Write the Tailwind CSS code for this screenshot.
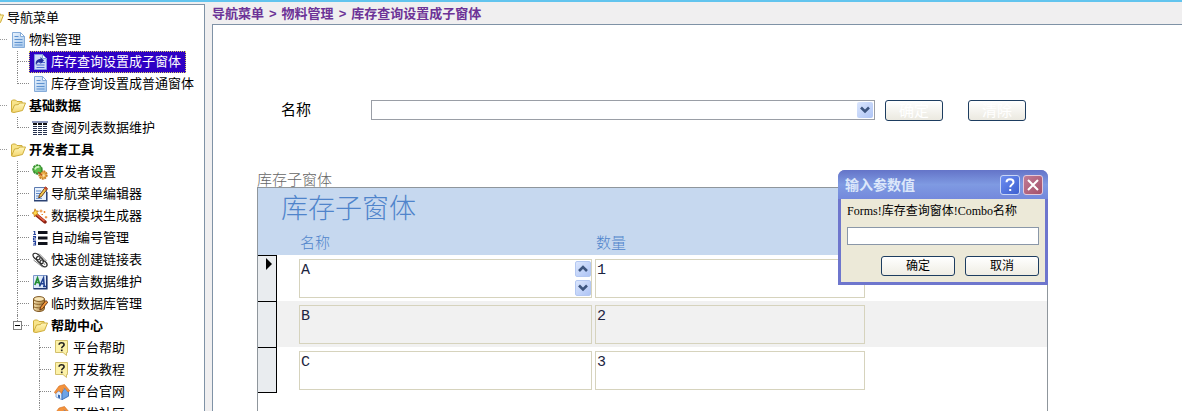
<!DOCTYPE html>
<html lang="zh-CN">
<head>
<meta charset="utf-8">
<title>库存查询设置成子窗体</title>
<script src="https://cdn.jsdelivr.net/npm/@tailwindcss/browser@4"></script>
</head>
<body class="relative h-screen overflow-hidden flex flex-col bg-[#f0eff0] text-black font-['Liberation_Sans','Noto_Sans_CJK_SC',sans-serif] text-[13px] leading-[22px]">

<svg width="0" height="0" class="absolute" aria-hidden="true">
  <defs>
    <linearGradient id="gDoc" x1="0" y1="0" x2="1" y2="1"><stop offset="0" stop-color="#eaf3fd"/><stop offset="1" stop-color="#a3c6ec"/></linearGradient>
    <linearGradient id="gFold" x1="0" y1="0" x2="0" y2="1"><stop offset="0" stop-color="#fff6bb"/><stop offset="1" stop-color="#f3d66e"/></linearGradient>
    <linearGradient id="gDb" x1="0" y1="0" x2="1" y2="0"><stop offset="0" stop-color="#f3dfae"/><stop offset="1" stop-color="#a97a33"/></linearGradient>
  </defs>
  <symbol id="doc" viewBox="0 0 16 16"><path d="M2.5 .5h8l4 4v11h-12z" fill="url(#gDoc)" stroke="#86acd9"/><path d="M10.500 .5v4h4z" fill="#fff" stroke="#86acd9"/><path d="M4.500 4.500h4M4.500 7.500h8M4.500 10.500h8M4.500 13h8" stroke="#5f92cf"/></symbol>
  <symbol id="docsel" viewBox="0 0 16 16"><path d="M2.500 .5h8l4 4v11h-12z" fill="#cfdcf8" stroke="#7f97e4"/><path d="M10.500 .5v4h4z" fill="#fff" stroke="#86acd9"/><path d="M7 8.500h6M4.500 11h8M4.500 13.500h8" stroke="#4d6fd0"/><path d="M4 11c-1-3.500 1-6 4.500-6V3l3.500 3.500L8.500 10V8C6 8 5 9 4 11z" fill="#23309c"/></symbol>
  <symbol id="folder" viewBox="0 0 16 16"><path d="M1.500 13.500V3l1-1h3l1.500 1.500h5l.5 3" fill="#f8e48a" stroke="#cfae3c"/><path d="M1.500 14L4.500 7l4-.5 1-1.500h6l-3 7.500L4 14.500z" fill="url(#gFold)" stroke="#cfae3c"/></symbol>
  <symbol id="grid" viewBox="0 0 16 16"><path d="M0 2h16" stroke="#1b2e74" stroke-width="1"/><path d="M1 4h15" stroke="#111" stroke-width="2" stroke-dasharray="4 1"/><path d="M1 6.500h15M1 8.500h15M1 10.500h15M1 12.500h15M1 14.500h15" stroke="#26324f" stroke-dasharray="4 1"/></symbol>
  <symbol id="gears" viewBox="0 0 16 16"><circle cx="11" cy="11" r="3.700" fill="#ecb04c" stroke="#c98228" stroke-width="2" stroke-dasharray="1.800 .7"/><circle cx="5.500" cy="5.500" r="4.300" fill="#5fc04c" stroke="#37902f" stroke-width="1.800" stroke-dasharray="2.400 .6"/><path d="M3 5.500c.5-2 2-3 4.500-2.500" stroke="#d0f5c2" fill="none" stroke-width="1.600"/><path d="M6 8l5 4" stroke="#b54f20" stroke-width="1.400"/><circle cx="11.500" cy="11.500" r="1.200" fill="#fbe2a8"/></symbol>
  <symbol id="edit" viewBox="0 0 16 16"><path d="M2.500 1.500h12v13h-12z" fill="#e8f1fc" stroke="#5d7bb0"/><path d="M2 14.800h12.800V6" fill="none" stroke="#2b4273" stroke-width="1.500"/><path d="M4 5h5M4 7.500h4M4 10h3M4 12.300h6" stroke="#5b86c6"/><path d="M13.500 1l2 1.700-6 7.800-2.800 1.400.8-3z" fill="#f3c64b" stroke="#5d3413" stroke-width=".9"/><path d="M13.200 .6l2.500 2-1.300 1.600-2.400-2z" fill="#c9442e"/></symbol>
  <symbol id="wand" viewBox="0 0 16 16"><path d="M4.500 7l8.500 7" stroke="#8c1f10" stroke-width="3.400" stroke-linecap="round"/><path d="M4.500 6.500l8 6.700" stroke="#e86045" stroke-width="1.600"/><path d="M3 .8l1 2.200L6.300 3 5 4.800 6.300 7 4 6.600 2.500 9 2 6.200.2 5l1.900-1z" fill="#ffd94a" stroke="#c07818" stroke-width=".8"/><path d="M9 1.500v3M7.500 3h3M12.500 3v2M11.500 4h2M14 8v2.500M12.800 9.200h2.500M9.500 6.500h1.500" stroke="#e8852e" stroke-width="1"/></symbol>
  <symbol id="num" viewBox="0 0 16 16"><path d="M6 2.500h9.500M6 8h9.500M6 13.500h9.500" stroke="#10131c" stroke-width="3"/><path d="M1.500 1.500h1.200V4.500M1.300 4.500h2.700M1 6.500h2.500v1.500H1.500V10H4M1 11.500h2.500v3.500H1M1.500 13.200h2" stroke="#22409c" fill="none" stroke-width="1.100"/></symbol>
  <symbol id="chain" viewBox="0 0 16 16"><g fill="none" stroke="#2e2e2e" stroke-width="1.300"><ellipse cx="4.500" cy="4.500" rx="4" ry="2.500" transform="rotate(40 4.500 4.500)"/><ellipse cx="8" cy="8" rx="4.200" ry="2.500" transform="rotate(45 8 8)"/><ellipse cx="11.500" cy="11.500" rx="4" ry="2.500" transform="rotate(40 11.500 11.500)"/><path d="M1.500 8l9 7M7 1.500l7.500 7.500M6 3l7 10" stroke="#888" stroke-width="1"/></g></symbol>
  <symbol id="lang" viewBox="0 0 16 16"><path d="M1.500 1.500h13v13h-13z" fill="#dfeafa" stroke="#7d98cc"/><path d="M14.800 1.500v13.300H1.500" fill="none" stroke="#1f3672" stroke-width="1.600"/><path d="M2.800 11L5.500 4 8 11M3.800 8.500h3.500" fill="none" stroke="#228e36" stroke-width="1.700"/><path d="M7.500 12.500l4-8.500 .8 8.500M9 9.700h3.300M11 12.500h3" fill="none" stroke="#1f3f8f" stroke-width="1.600"/></symbol>
  <symbol id="db" viewBox="0 0 16 16"><path d="M1.500 3v9.500c0 1.500 2 3 5.500 3s5.500-1.500 5.500-3V3" fill="url(#gDb)" stroke="#7d5520"/><ellipse cx="7" cy="3" rx="5.500" ry="2.400" fill="#f7e5b6" stroke="#7d5520"/><path d="M1.500 7c1 1.600 9 2 11 0M1.500 10.500c1 1.600 9 2 11 0" fill="none" stroke="#8a6128"/><path d="M13.800 4.500l2 1.700-5.300 6.500-2.700 1.300.8-2.900z" fill="#f0983b" stroke="#5c2a10" stroke-width=".9"/></symbol>
  <symbol id="help" viewBox="0 0 16 16"><path d="M1.500 .5h12v12h-1v3l-3.500-3H1.500z" fill="#fdf2a8" stroke="#d2bf6c"/><path d="M5.100 4.800c0-2.800 5-2.800 5 0 0 1.600-2.400 1.600-2.400 3.400" fill="none" stroke="#222" stroke-width="1.600"/><path d="M6.900 9.500h1.700v1.700H6.900z" fill="#222"/></symbol>
  <symbol id="home" viewBox="0 0 16 16"><path d="M2 8v5l6 2.700V7z" fill="#e4eefc" stroke="#7fa6dc" stroke-width=".9"/><path d="M8 15.700l6.500-3.500V7l-3-3.500L8 8z" fill="#6ea3e6" stroke="#3c6fb8" stroke-width=".9"/><path d="M.3 8.500L5 2l5.500-1.500 5.300 6.300-1.800 1.200L10 3.300 7.500 9.500 4.800 6 1.800 9.500z" fill="#f4933c" stroke="#cf6b20" stroke-width=".6"/><path d="M4 10.500l2 .8v3.200l-2-.9z" fill="#3565ad"/></symbol>
  <symbol id="down" viewBox="0 0 16 16"><path d="M4 5.500l4 4 4-4" fill="none" stroke="#3d557f" stroke-width="2.600"/></symbol>
  <symbol id="up" viewBox="0 0 16 16"><path d="M4 10l4-4 4 4" fill="none" stroke="#3d557f" stroke-width="2.600"/></symbol>
</svg>

<div class="h-[2px] shrink-0 bg-[#62c4ee]"></div>

<div class="flex flex-1 min-h-0 pt-[2px]">
  <nav aria-label="导航菜单" class="w-[205px] shrink-0 overflow-hidden bg-white border-t border-r border-[#7f92a6] pt-[2px] whitespace-nowrap">
    <div class="flex h-[22px] items-center gap-[3px]">
      <span class="w-1 h-4 overflow-hidden flex justify-end"><svg class="size-4 shrink-0"><use href="#folder"/></svg></span>
      <span>导航菜单</span>
    </div>
    <ul>
      <li>
        <div class="flex h-[22px]"><i class="w-[7px] h-[11px] border-b border-dotted border-[#999]"></i>
          <a href="#" class="flex items-center gap-[3px] pl-[3px]"><svg class="size-4"><use href="#doc"/></svg>物料管理</a></div>
        <ul>
          <li class="flex h-[22px] pl-[17px]"><i class="w-3 flex flex-col"><b class="h-[11px] border-l border-b border-dotted border-[#888]"></b><b class="h-[11px] border-l border-dotted border-[#888]"></b></i>
            <a href="#" class="flex items-center gap-[3px] pl-[3px] pr-[5px] bg-[#2f00c4] text-white outline-1 -outline-offset-1 outline-dotted outline-[#d8d060]"><svg class="size-4"><use href="#docsel"/></svg>库存查询设置成子窗体</a></li>
          <li class="flex h-[22px] pl-[17px]"><i class="w-3 h-[11px] border-l border-b border-dotted border-[#888]"></i>
            <a href="#" class="flex items-center gap-[3px] pl-[3px]"><svg class="size-4"><use href="#doc"/></svg>库存查询设置成普通窗体</a></li>
        </ul>
      </li>
      <li>
        <div class="flex h-[22px]"><i class="w-[7px] h-[11px] border-b border-dotted border-[#999]"></i>
          <a href="#" class="flex items-center gap-[3px] pl-[3px] font-bold"><svg class="size-4"><use href="#folder"/></svg>基础数据</a></div>
        <ul>
          <li class="flex h-[22px] pl-[17px]"><i class="w-3 h-[11px] border-l border-b border-dotted border-[#888]"></i>
            <a href="#" class="flex items-center gap-[3px] pl-[3px]"><svg class="size-4"><use href="#grid"/></svg>查阅列表数据维护</a></li>
        </ul>
      </li>
      <li>
        <div class="flex h-[22px]"><i class="w-[7px] h-[11px] border-b border-dotted border-[#999]"></i>
          <a href="#" class="flex items-center gap-[3px] pl-[3px] font-bold"><svg class="size-4"><use href="#folder"/></svg>开发者工具</a></div>
        <ul>
          <li class="flex h-[22px] pl-[17px]"><i class="w-3 flex flex-col"><b class="h-[11px] border-l border-b border-dotted border-[#888]"></b><b class="h-[11px] border-l border-dotted border-[#888]"></b></i>
            <a href="#" class="flex items-center gap-[3px] pl-[3px]"><svg class="size-4"><use href="#gears"/></svg>开发者设置</a></li>
          <li class="flex h-[22px] pl-[17px]"><i class="w-3 flex flex-col"><b class="h-[11px] border-l border-b border-dotted border-[#888]"></b><b class="h-[11px] border-l border-dotted border-[#888]"></b></i>
            <a href="#" class="flex items-center gap-[3px] pl-[3px]"><svg class="size-4"><use href="#edit"/></svg>导航菜单编辑器</a></li>
          <li class="flex h-[22px] pl-[17px]"><i class="w-3 flex flex-col"><b class="h-[11px] border-l border-b border-dotted border-[#888]"></b><b class="h-[11px] border-l border-dotted border-[#888]"></b></i>
            <a href="#" class="flex items-center gap-[3px] pl-[3px]"><svg class="size-4"><use href="#wand"/></svg>数据模块生成器</a></li>
          <li class="flex h-[22px] pl-[17px]"><i class="w-3 flex flex-col"><b class="h-[11px] border-l border-b border-dotted border-[#888]"></b><b class="h-[11px] border-l border-dotted border-[#888]"></b></i>
            <a href="#" class="flex items-center gap-[3px] pl-[3px]"><svg class="size-4"><use href="#num"/></svg>自动编号管理</a></li>
          <li class="flex h-[22px] pl-[17px]"><i class="w-3 flex flex-col"><b class="h-[11px] border-l border-b border-dotted border-[#888]"></b><b class="h-[11px] border-l border-dotted border-[#888]"></b></i>
            <a href="#" class="flex items-center gap-[3px] pl-[3px]"><svg class="size-4"><use href="#chain"/></svg>快速创建链接表</a></li>
          <li class="flex h-[22px] pl-[17px]"><i class="w-3 flex flex-col"><b class="h-[11px] border-l border-b border-dotted border-[#888]"></b><b class="h-[11px] border-l border-dotted border-[#888]"></b></i>
            <a href="#" class="flex items-center gap-[3px] pl-[3px]"><svg class="size-4"><use href="#lang"/></svg>多语言数据维护</a></li>
          <li class="flex h-[22px] pl-[17px]"><i class="w-3 flex flex-col"><b class="h-[11px] border-l border-b border-dotted border-[#888]"></b><b class="h-[11px] border-l border-dotted border-[#888]"></b></i>
            <a href="#" class="flex items-center gap-[3px] pl-[3px]"><svg class="size-4"><use href="#db"/></svg>临时数据库管理</a></li>
          <li>
            <div class="flex h-[22px] pl-[13px]">
              <span class="flex flex-col items-center w-[9px]"><i class="h-[6px] border-l border-dotted border-[#888]"></i><button type="button" aria-label="折叠" class="size-[9px] border border-[#808080] bg-white flex items-center justify-center"><i class="w-[5px] h-px bg-black"></i></button></span>
              <i class="w-[7px] h-[11px] border-b border-dotted border-[#888]"></i>
              <a href="#" class="flex items-center gap-[3px] pl-[3px] font-bold"><svg class="size-4"><use href="#folder"/></svg>帮助中心</a></div>
            <ul>
              <li class="flex h-[22px] pl-[39px]"><i class="w-3 flex flex-col"><b class="h-[11px] border-l border-b border-dotted border-[#888]"></b><b class="h-[11px] border-l border-dotted border-[#888]"></b></i>
                <a href="#" class="flex items-center gap-[3px] pl-[3px]"><svg class="size-4"><use href="#help"/></svg>平台帮助</a></li>
              <li class="flex h-[22px] pl-[39px]"><i class="w-3 flex flex-col"><b class="h-[11px] border-l border-b border-dotted border-[#888]"></b><b class="h-[11px] border-l border-dotted border-[#888]"></b></i>
                <a href="#" class="flex items-center gap-[3px] pl-[3px]"><svg class="size-4"><use href="#help"/></svg>开发教程</a></li>
              <li class="flex h-[22px] pl-[39px]"><i class="w-3 flex flex-col"><b class="h-[11px] border-l border-b border-dotted border-[#888]"></b><b class="h-[11px] border-l border-dotted border-[#888]"></b></i>
                <a href="#" class="flex items-center gap-[3px] pl-[3px]"><svg class="size-4"><use href="#home"/></svg>平台官网</a></li>
              <li class="flex h-[22px] pl-[39px]"><i class="w-3 flex flex-col"><b class="h-[11px] border-l border-b border-dotted border-[#888]"></b><b class="h-[11px] border-l border-dotted border-[#888]"></b></i>
                <a href="#" class="flex items-center gap-[3px] pl-[3px]"><svg class="size-4"><use href="#home"/></svg>开发社区</a></li>
            </ul>
          </li>
        </ul>
      </li>
    </ul>
  </nav>

  <main class="flex-1 min-w-0 flex flex-col pl-[7px]">
    <div class="flex gap-[5px] h-5 leading-5 font-bold text-[#6c3397] whitespace-nowrap"><span>导航菜单</span><span>&gt;</span><span>物料管理</span><span>&gt;</span><span>库存查询设置成子窗体</span></div>

    <section class="flex-1 min-h-0 flex flex-col bg-white border-t border-l border-[#7f92a6] pl-11 pr-[134px] pt-[75px]">
      <form class="flex h-[21px] shrink-0 items-start pl-6 pr-[22px]">
        <label for="combo" class="w-[90px] text-[15px] leading-5">名称</label>
        <div class="flex flex-1 h-5 border border-[#9a9ea6] bg-white p-px">
          <input id="combo" type="text" class="flex-1 min-w-0 outline-none px-1">
          <button type="button" aria-label="展开" class="w-4 rounded-[2px] bg-linear-to-br from-[#dbe6fd] to-[#aec4f5] flex items-center justify-center"><svg class="size-4"><use href="#down"/></svg></button>
        </div>
        <button type="button" class="ml-[10px] w-[58px] h-[21px] rounded-[3px] border border-[#1d3d60] bg-linear-to-b from-white to-[#ebe9e0] text-[15px] leading-[18px] text-white">确定</button>
        <button type="button" class="ml-[25px] w-[58px] h-[21px] rounded-[3px] border border-[#1d3d60] bg-linear-to-b from-white to-[#ebe9e0] text-[15px] leading-[18px] text-white">清除</button>
      </form>

      <h2 class="mt-[50px] h-4 shrink-0 text-[15px] leading-[18px] font-light text-[#666]">库存子窗体</h2>
      <div class="flex-1 min-h-0 border border-b-0 border-[#8f969c]">
        <div class="h-[42px] pl-[23px] bg-[#c6d8ef] text-[27px] leading-[42px] font-light text-[#4f84cb]">库存子窗体</div>
        <table class="w-full table-fixed border-separate border-spacing-0 text-[15px]">
          <colgroup><col class="w-[19px]"><col class="w-[318px]"><col class="w-[270px]"><col></colgroup>
          <thead class="bg-[#c6d8ef] text-[#4f84cb]">
            <tr class="h-[25px]"><th></th><th class="pl-[23px] text-left font-light" id="h1">名称</th><th class="pl-px text-left font-light" id="h2">数量</th><th></th></tr>
          </thead>
          <tbody class="text-[#1c2440] font-['Liberation_Mono',monospace]">
            <tr class="h-[46px]">
              <td class="bg-[#e9ecef] border-t border-r border-black align-top"><svg class="ml-2 mt-[2px] w-[7px] h-3" viewBox="0 0 7 12"><path d="M0 0l6 6-6 6z"/></svg></td>
              <td class="pl-[22px] pr-[3px]"><div class="flex h-[39px] border border-[#d6d3bd] bg-white">
                <textarea aria-labelledby="h1" class="flex-1 min-w-0 resize-none overflow-hidden outline-none pl-px pt-px leading-5">A</textarea>
                <div class="flex flex-col justify-between w-4 py-px"><button type="button" aria-label="向上" class="h-4 rounded-[2px] border border-[#b4c8f2] bg-linear-to-br from-[#dbe6fd] to-[#aec4f5] flex items-center justify-center"><svg class="size-4 shrink-0"><use href="#up"/></svg></button><button type="button" aria-label="向下" class="h-4 rounded-[2px] border border-[#b4c8f2] bg-linear-to-br from-[#dbe6fd] to-[#aec4f5] flex items-center justify-center"><svg class="size-4 shrink-0"><use href="#down"/></svg></button></div>
              </div></td>
              <td><textarea aria-labelledby="h2" class="block w-full h-[39px] resize-none overflow-hidden outline-none border border-[#d6d3bd] bg-white pl-px pt-px leading-5">1</textarea></td>
              <td></td>
            </tr>
            <tr class="h-[46px] bg-[#f1f1f1]">
              <td class="bg-[#e9ecef] border-t border-r border-black"></td>
              <td class="pl-[22px] pr-[3px]"><textarea aria-labelledby="h1" class="block w-full h-[39px] resize-none overflow-hidden outline-none border border-[#d6d3bd] pl-px pt-px leading-5">B</textarea></td>
              <td><textarea aria-labelledby="h2" class="block w-full h-[39px] resize-none overflow-hidden outline-none border border-[#d6d3bd] pl-px pt-px leading-5">2</textarea></td>
              <td></td>
            </tr>
            <tr class="h-[46px]">
              <td class="bg-[#e9ecef] border-y border-r border-black"></td>
              <td class="pl-[22px] pr-[3px]"><textarea aria-labelledby="h1" class="block w-full h-[39px] resize-none overflow-hidden outline-none border border-[#d6d3bd] bg-white pl-px pt-px leading-5">C</textarea></td>
              <td><textarea aria-labelledby="h2" class="block w-full h-[39px] resize-none overflow-hidden outline-none border border-[#d6d3bd] bg-white pl-px pt-px leading-5">3</textarea></td>
              <td></td>
            </tr>
          </tbody>
        </table>
      </div>
    </section>
  </main>
</div>

<div role="dialog" aria-labelledby="dt" class="absolute right-[134px] top-[170px] w-[210px] rounded-t-[7px] bg-[#6e76cd] px-[3px] pb-[3px] overflow-hidden">
  <div class="-mx-[3px] h-[29px] flex items-center gap-[3px] pl-[7px] pr-[5px] bg-linear-to-b from-[#6474c8] via-[#7f9ae2] to-[#7489dc]">
    <h3 id="dt" class="flex-1 font-bold text-[14px] text-[#dce7fa]">输入参数值</h3>
    <button type="button" aria-label="帮助" class="size-5 rounded-[3px] border border-[#c9d6f6] bg-linear-to-br from-[#6d8df0] to-[#3d5fd0] flex items-center justify-center"><svg class="size-4 shrink-0" viewBox="0 0 16 16"><path d="M4.500 5.300c0-4 7-4 7 0 0 2.300-3.300 2.300-3.300 5" fill="none" stroke="#fff" stroke-width="2"/><path d="M7.200 12h2v2h-2z" fill="#fff"/></svg></button>
    <button type="button" aria-label="关闭" class="size-5 rounded-[3px] border border-[#e3c9da] bg-linear-to-br from-[#c07c96] to-[#a5506a] flex items-center justify-center"><svg class="size-4 shrink-0" viewBox="0 0 16 16"><path d="M3 3l10 10M13 3L3 13" stroke="#fff" stroke-width="2"/></svg></button>
  </div>
  <div class="bg-[#ece9d8] px-[6px] pt-[2px] pb-[6px]">
    <label for="param" class="block h-[26px] leading-[20px] text-[12px] font-['Liberation_Serif','Noto_Sans_CJK_SC',serif]">Forms!库存查询窗体!Combo名称</label>
    <input id="param" type="text" class="block w-full h-[18px] border border-[#8a97a8] bg-white outline-none px-1">
    <div class="flex justify-end gap-[10px] pt-[11px] text-[12px] leading-4">
      <button type="button" class="w-[74px] h-5 rounded-[3px] border border-[#1d3d60] bg-linear-to-b from-white to-[#efede4]">确定</button>
      <button type="button" class="w-[74px] h-5 rounded-[3px] border border-[#1d3d60] bg-linear-to-b from-white to-[#efede4]">取消</button>
    </div>
  </div>
</div>
</body>
</html>
